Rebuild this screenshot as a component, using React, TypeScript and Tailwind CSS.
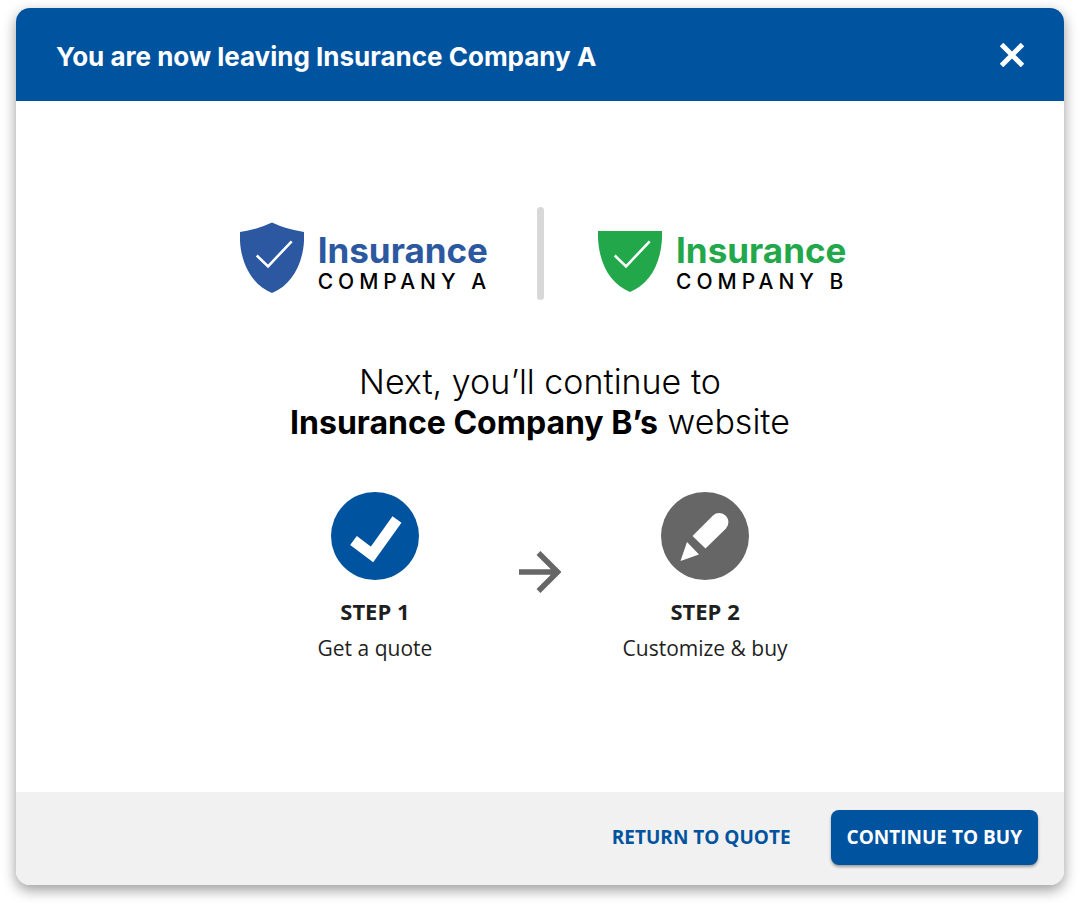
import React from "react";

// Logo Component
interface LogoProps {
  company: string;
  shield: string;
  shieldColor: string;
  nameColor: string;
}

const Logo: React.FC<LogoProps> = ({ company, shield, shieldColor, nameColor }) => {
  return (
    <div className="flex items-center gap-3.5 pt-2">
      <svg viewBox="0 0 65 72" className="h-[72px] w-16 shrink-0" aria-hidden="true">
        <path d={shield} className={shieldColor} />
        <path
          d="M17 33.5 L28.5 44.5 L52.5 19"
          fill="none"
          stroke="#fff"
          strokeWidth="2.6"
        />
      </svg>
      <div className="pt-3">
        <p className={`text-[35px] leading-9 font-bold ${nameColor}`}>Insurance</p>
        <p className="text-[21px] leading-7 font-medium tracking-[5px] text-black">{company}</p>
      </div>
    </div>
  );
};

// Step Component
interface StepProps {
  title: string;
  text: string;
  circleColor: string;
  children: React.ReactNode;
}

const Step: React.FC<StepProps> = ({ title, text, circleColor, children }) => {
  return (
    <li className="flex flex-col items-center text-[#1f1f1f]">
      <svg viewBox="0 0 88 88" className="size-[88px]" aria-hidden="true">
        <circle cx="44" cy="44" r="44" className={circleColor} />
        {children}
      </svg>
      <h3 className="mt-[15px] text-[22px] leading-8 font-bold">{title}</h3>
      <p className="mt-[5px] text-[21px] leading-8 font-medium whitespace-nowrap">{text}</p>
    </li>
  );
};

export default function App() {
  return (
    <main className="min-h-screen bg-white px-4 pt-2 pb-6 font-['Inter',sans-serif]">
      <section
        role="dialog"
        aria-labelledby="dialog-title"
        className="overflow-hidden rounded-[14px] bg-white shadow-[0_5px_14px_rgba(0,0,0,0.4)]"
      >
        <header className="flex items-center justify-between bg-[#00539f] py-6 pr-8 pl-10 text-white">
          <h1 id="dialog-title" className="pt-1 text-[26px] leading-[41px] font-bold">
            You are now leaving Insurance Company A
          </h1>
          <button type="button" aria-label="Close" className="cursor-pointer p-2">
            <svg viewBox="0 0 24 24" className="size-6" aria-hidden="true">
              <path d="M1.5 1.5 L22.5 22.5 M22.5 1.5 L1.5 22.5" stroke="currentColor" strokeWidth="5" />
            </svg>
          </button>
        </header>

        <div className="flex flex-col items-center px-8 pt-[106px] pb-32">
          <div className="flex items-center pl-2">
            <Logo
              company="COMPANY A"
              shield="M0 9.5 Q18 7 32.5 0 Q47 7 65 9.5 C66.5 38 54 63 32.5 71.5 C11 63 -1.5 38 0 9.5 Z"
              shieldColor="fill-[#2b58a0]"
              nameColor="text-[#2b58a0]"
            />
            <div className="mr-[54px] ml-[46px] h-[93px] w-[7px] rounded-full bg-[#d8d8d8]" />
            <Logo
              company="COMPANY B"
              shield="M0 8.5 H65 C66 38 54 62 32.5 70.5 C11 62 -1 38 0 8.5 Z"
              shieldColor="fill-[#22a84b]"
              nameColor="text-[#22a84b]"
            />
          </div>

          <h2 className="mt-[62px] text-center text-[34px] leading-10 font-light text-black">
            Next, you’ll continue to
            <br />
            <strong className="text-[32px] font-bold">Insurance Company B’s</strong> website
          </h2>

          <ol className="mt-[49px] grid grid-cols-3 items-center font-['Open_Sans',sans-serif]">
            <Step title="STEP 1" text="Get a quote" circleColor="fill-[#00539f]">
              <path d="M22.5 48.5 L41 62.5 L66 27.5" fill="none" stroke="#fff" strokeWidth="11" />
            </Step>
            <li className="flex justify-center pb-3" aria-hidden="true">
              <svg viewBox="0 0 42 42" className="size-[42px]">
                <path d="M0 21 H38 M19.5 2 L38.5 21 L19.5 40" fill="none" stroke="#666" strokeWidth="5.5" />
              </svg>
            </li>
            <Step title="STEP 2" text="Customize & buy" circleColor="fill-[#666666]">
              <path d="M31.5 44 L52 23.5 A9.2 9.2 0 0 1 65 36.5 L44.5 56.5 Z" fill="#fff" />
              <path d="M26 50 L38 62.5 L19.5 69 Z" fill="#fff" />
            </Step>
          </ol>
        </div>

        <footer className="flex items-center justify-end gap-10 bg-[#f1f1f1] pt-[18px] pr-[26px] pb-5 pl-8 font-['Open_Sans',sans-serif] text-[19px] leading-[55px] font-bold">
          <button type="button" className="cursor-pointer text-[#00539f]">
            RETURN TO QUOTE
          </button>
          <button
            type="button"
            className="cursor-pointer rounded-lg bg-[#00539f] px-4 text-white shadow-[0_2px_3px_rgba(0,0,0,0.35)]"
          >
            CONTINUE TO BUY
          </button>
        </footer>
      </section>
    </main>
  );
}
